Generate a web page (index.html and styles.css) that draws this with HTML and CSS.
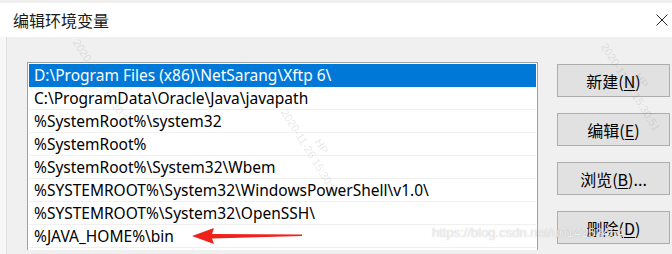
FILE: index.html
```html
<!DOCTYPE html>
<html lang="zh-CN">
<head>
    <meta charset="UTF-8">
    <title>编辑环境变量</title>
    <link rel="stylesheet" href="styles.css">
</head>
<body>
    <div class="dialog">
        <div class="title-bar">
            <span class="title">编辑环境变量</span>
            <svg class="close" width="12" height="12" viewBox="0 0 12 12">
                <path d="M0.5 0.5 L11.5 11.5 M11.5 0.5 L0.5 11.5" stroke="#222" stroke-width="1"/>
            </svg>
        </div>
        <div class="content">
            <div class="side-strip"></div>
            <ul class="path-list">
                <li class="selected">D:\Program Files (x86)\NetSarang\Xftp 6\</li>
                <li>C:\ProgramData\Oracle\Java\javapath</li>
                <li>%SystemRoot%\system32</li>
                <li>%SystemRoot%</li>
                <li>%SystemRoot%\System32\Wbem</li>
                <li>%SYSTEMROOT%\System32\WindowsPowerShell\v1.0\</li>
                <li>%SYSTEMROOT%\System32\OpenSSH\</li>
                <li>%JAVA_HOME%\bin</li>
            </ul>
            <div class="buttons">
                <button>新建(<u>N</u>)</button>
                <button>编辑(<u>E</u>)</button>
                <button>浏览(<u>B</u>)...</button>
                <button>删除(<u>D</u>)</button>
            </div>
        </div>

        <!-- red arrow pointing at the new entry -->
        <svg class="arrow" width="112" height="18" viewBox="0 0 112 18">
            <path d="M0 9 L22 1 L20 7 L110 7.5 L110 9 L20 11.5 L22 17 Z" fill="#f0201a"/>
        </svg>

        <!-- faint watermarks -->
        <div class="stamp stamp-1">HP<br>2020-11-26 15:30:51</div>
        <div class="stamp stamp-2">HP<br>2020-11-26 15:30:51</div>
        <div class="stamp stamp-3">HP<br>2020-11-26 15:30:51</div>
        <div class="site-mark">https://blog.csdn.net/u014253464</div>
    </div>
</body>
</html>
```

FILE: styles.css
```css
html, body {
    margin: 0;
    padding: 0;
}

body {
    width: 672px;
    height: 254px;
    overflow: hidden;
    background-color: #f0f0f0;
    font-family: "Noto Sans", "Noto Sans CJK SC", sans-serif;
}

.dialog {
    position: relative;
    width: 672px;
    height: 254px;
    padding-top: 3px;
    box-sizing: border-box;
    overflow: hidden;
}

.title-bar {
    height: 34px;
    background-color: #ffffff;
    display: flex;
    align-items: center;
    justify-content: space-between;
    padding: 0 4px 0 13px;
}

.title {
    font-size: 16px;
    color: #1a1a1a;
    font-family: "Noto Sans CJK SC", sans-serif;
}

.close {
    margin-top: -1px;
}

.content {
    display: flex;
    align-items: flex-start;
    padding-top: 25px;
}

.side-strip {
    width: 6px;
    height: 230px;
    background-color: #f7f7f7;
    border-right: 1px solid #e2e2e2;
    margin-top: -25px;
    margin-right: 20px;
}

.path-list {
    list-style: none;
    margin: 0;
    padding: 1px 1px 0 1px;
    width: 507px;
    height: 186px;
    background-color: #ffffff;
    border: 1px solid #a0a0a0;
    border-bottom: none;
}

.path-list li {
    height: 23px;
    line-height: 22px;
    padding-left: 5px;
    font-size: 15.5px;
    color: #000000;
    border-bottom: 1px solid #f0f0f0;
    box-sizing: border-box;
    white-space: nowrap;
}

.path-list li.selected {
    background-color: #0078d7;
    color: #ffffff;
    border-bottom-color: #0078d7;
}

.buttons {
    display: flex;
    flex-direction: column;
    gap: 16px;
    margin-left: 19px;
    margin-top: 2px;
}

.buttons button {
    width: 113px;
    height: 33px;
    background-color: #e1e1e1;
    border: 1px solid #adadad;
    font-family: "Noto Sans CJK SC", sans-serif;
    font-size: 16px;
    color: #000;
    padding: 0;
}

.buttons button u {
    text-underline-offset: 2px;
}

.arrow {
    position: absolute;
    left: 192px;
    top: 227px;
}

.stamp {
    position: absolute;
    font-family: "Liberation Sans", sans-serif;
    font-size: 11px;
    line-height: 13px;
    color: rgba(120, 120, 120, 0.18);
    text-align: center;
    transform: rotate(58deg);
    transform-origin: left top;
    white-space: nowrap;
}

.stamp-1 {
    left: 92px;
    top: 30px;
}

.stamp-2 {
    left: 300px;
    top: 100px;
}

.stamp-3 {
    left: 620px;
    top: 34px;
}

.site-mark {
    position: absolute;
    left: 432px;
    top: 225px;
    font-family: "Liberation Sans", sans-serif;
    font-size: 13px;
    color: rgba(255, 255, 255, 0.75);
    text-shadow: 0 0 1px rgba(120, 120, 120, 0.5);
    white-space: nowrap;
}
```
